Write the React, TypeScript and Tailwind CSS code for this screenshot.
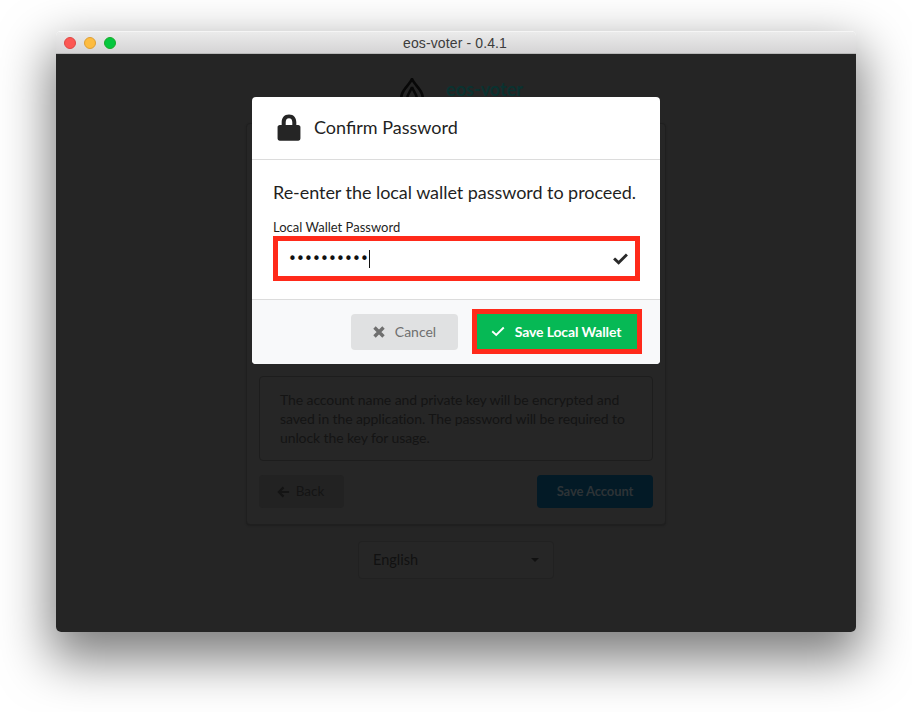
import React from "react";

const font = { fontFamily: '"Lato", "Liberation Sans", sans-serif' };

function Check({ className, strokeWidth = 3 }: { className?: string; strokeWidth?: number }) {
  return (
    <svg viewBox="0 0 16 12" className={className} fill="none" stroke="currentColor" strokeWidth={strokeWidth} strokeLinecap="square">
      <path d="M2.2 6.4 L6 10 L13.8 2.2" />
    </svg>
  );
}

function Background() {
  return (
    <div className="flex flex-col items-center h-full text-[#1b1b1b]">
      <div className="flex items-start h-[44px] mt-[20px] gap-[21px] pt-[4px] ml-[10px]">
        <svg viewBox="0 0 26 30" className="w-[26px] h-[30px]" fill="none" stroke="#080808" strokeWidth="2.6">
          <path d="M13 1 C11 6 5 10 3 16 C1 22 4 28 8 29 H18 C22 28 25 22 23 16 C21 10 15 6 13 1 Z" />
          <path d="M13 9 C12 13 8 16 8 21 C8 25 10 27 13 28 C16 27 18 25 18 21 C18 16 14 13 13 9 Z" />
        </svg>
        <span className="text-[18px] leading-[22px] font-bold text-[#0a3230]">eos-voter</span>
      </div>
      <div className="mt-[5px] w-[420px] h-[402px] flex flex-col justify-end rounded-[4px] border border-[#1f1f1f] bg-[#262626] px-[12px] pb-[16px] shadow-[0_1px_2px_rgba(0,0,0,0.2)]">
        <div className="h-[85px] rounded-[4px] border border-[#1d1d1d] pl-[20px] pr-[14px] pt-[13px] text-[14px] leading-[19px] tracking-[-0.1px] text-[#141414]">
          The account name and private key will be encrypted and saved in the application. The password will be required to unlock the key for usage.
        </div>
        <div className="flex justify-between mt-[14px]">
          <div className="w-[85px] h-[33px] rounded-[4px] bg-[#222222] flex items-center justify-center gap-[6px] pr-[2px] text-[13.5px] text-[#141414]">
            <svg viewBox="0 0 14 12" className="w-[13px] h-[12px]" fill="none" stroke="#141414" strokeWidth="2.4">
              <path d="M13 6 H2 M7 1 L2 6 L7 11" />
            </svg>
            Back
          </div>
          <div className="w-[116px] h-[33px] rounded-[4px] bg-[#031a26] flex items-center justify-center text-[13px] font-bold tracking-[-0.1px] text-[#2d3336]">
            Save Account
          </div>
        </div>
      </div>
      <div className="mt-[16px] w-[196px] h-[38px] rounded-[4px] border border-[#212121] bg-[#262626] flex items-center justify-between pl-[14px] pr-[14px] text-[14.5px] text-[#111111]">
        English
        <span className="w-0 h-0 border-x-[4px] border-x-transparent border-t-[4px] border-t-[#111111]" />
      </div>
    </div>
  );
}

function Modal() {
  return (
    <div className="absolute left-[196px] top-[43px] w-[408px] h-[267px] flex flex-col rounded-[4px] bg-white overflow-hidden">
      <div className="h-[63px] shrink-0 flex items-center pl-[25px] pb-[2px] gap-[13px] border-b border-[#dcdcdc]">
        <svg viewBox="0 0 26 29.5" className="w-[24px] h-[27px]" fill="#252525">
          <path d="M13 0.5 C7.6 0.5 5 4.4 5 9 V12 H3 C1.5 12 0.5 13 0.5 14.5 V26.5 C0.5 28 1.5 29.2 3 29.2 H23 C24.5 29.2 25.5 28 25.5 26.5 V14.5 C25.5 13 24.5 12 23 12 H21 V9 C21 4.4 18.4 0.5 13 0.5 Z M9.4 12 V9 C9.4 6.4 10.6 4.6 13 4.6 C15.4 4.6 16.6 6.4 16.6 9 V12 Z" />
        </svg>
        <span className="text-[18px] text-[#1f1f1f]">Confirm Password</span>
      </div>
      <div className="flex-1 px-[21px] pt-[20px]">
        <div className="text-[18px] leading-[24px] tracking-[-0.05px] text-[#1f1f1f]">Re-enter the local wallet password to proceed.</div>
        <div className="mt-[15px] text-[13px] leading-[16px] text-[#1f1f1f]">Local Wallet Password</div>
        <div className="mt-[1px] w-[367px] h-[45px] border-[5px] border-[#ff2a1a] flex items-center justify-between pl-[10px] pr-[7px] bg-white">
          <div className="flex items-center">
            <span className="text-[#111] text-[15px] tracking-[-0.85px] leading-none pt-[2px]" style={{ fontFamily: '"DejaVu Sans", sans-serif' }}>
              ••••••••••
            </span>
            <span className="w-px h-[18px] bg-[#111] ml-[1px]" />
          </div>
          <Check className="w-[15px] h-[12px] text-[#2a2a2a]" />
        </div>
      </div>
      <div className="h-[65px] shrink-0 border-t border-[#dcdcdc] bg-[#f8f9fa] flex items-start justify-end pr-[18px] pt-[9px] gap-[14px]">
        <div className="mt-[5px] w-[107px] h-[36px] rounded-[4px] bg-[#e0e1e2] flex items-center justify-center gap-[10px] pb-[1px] text-[14px] text-[#6f6f6f]">
          <svg viewBox="0 0 12 12" className="w-[12px] h-[12px]" fill="none" stroke="#6f6f6f" strokeWidth="3.4">
            <path d="M1.5 1.5 L10.5 10.5 M10.5 1.5 L1.5 10.5" />
          </svg>
          Cancel
        </div>
        <div className="w-[170px] h-[45px] border-[5px] border-[#ff2a1a] bg-[#06b955] flex items-center justify-center gap-[10px] pr-[2px] text-[14px] font-bold tracking-[-0.12px] text-white">
          <Check className="w-[14px] h-[11px] text-white" strokeWidth={2.2} />
          Save Local Wallet
        </div>
      </div>
    </div>
  );
}

export default function App() {
  return (
    <div className="w-[912px] h-[712px] bg-white overflow-hidden pt-[31px] pl-[56px]" style={font}>
      <div className="w-[800px] h-[601px] rounded-[5px] overflow-hidden shadow-[0_22px_50px_6px_rgba(0,0,0,0.5)] flex flex-col">
        <div className="h-[23px] shrink-0 relative flex items-center justify-center pt-[1px] pr-[2px] bg-gradient-to-b from-[#ebebeb] to-[#d5d4d5] border-b border-[#b8b8b8] border-t border-t-[#f5f5f5]">
          <div className="absolute left-[8px] top-[5px] flex gap-[8px]">
            <span className="w-[12px] h-[12px] rounded-full bg-[#fc5753] border border-[#df4744]" />
            <span className="w-[12px] h-[12px] rounded-full bg-[#fdbc40] border border-[#de9f34]" />
            <span className="w-[12px] h-[12px] rounded-full bg-[#05c73f] border border-[#1aab29]" />
          </div>
          <span className="text-[14px] tracking-[0.12px] text-[#3c3c3c]" style={{ fontFamily: '"Liberation Sans", sans-serif' }}>eos-voter - 0.4.1</span>
        </div>
        <div className="relative flex-1 bg-[#252525]">
          <Background />
          <Modal />
        </div>
      </div>
    </div>
  );
}
